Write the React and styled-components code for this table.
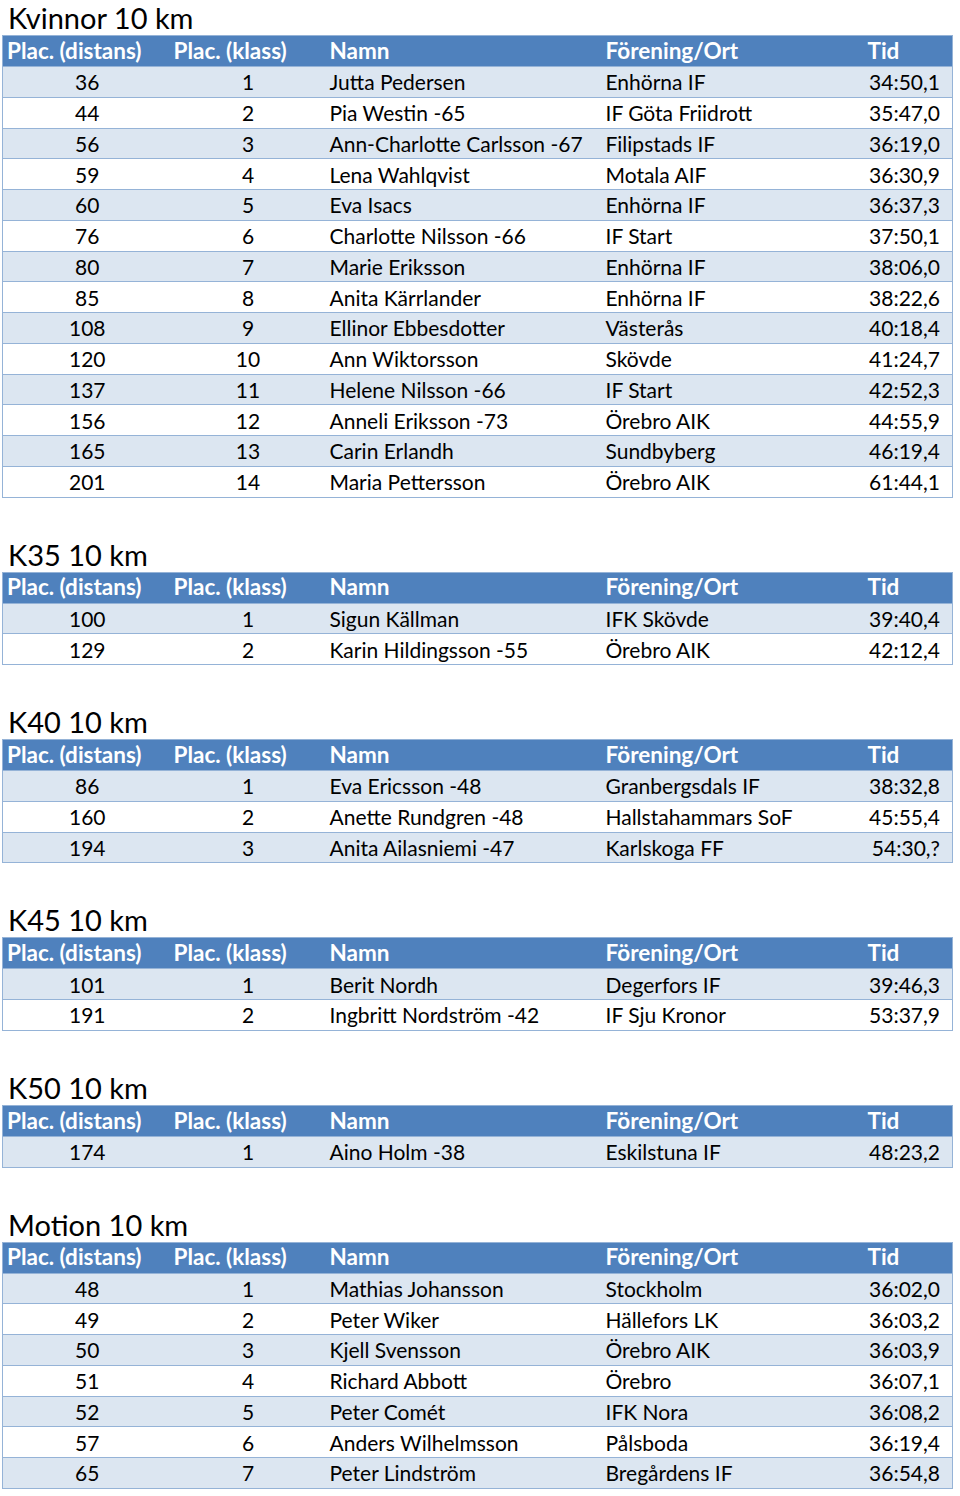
import React from 'react';
import styled, { createGlobalStyle } from 'styled-components';

const GlobalStyle = createGlobalStyle`
  body {
    margin: 0;
    background: #fff;
    font-family: Lato, 'Open Sans', sans-serif;
    color: #000;
  }
`;

const Page = styled.div`
  width: 950px;
  padding: 0 0 0 2px;
`;

const Section = styled.section`
  margin-top: ${(props) => (props.first ? '0' : '39px')};
`;

const Title = styled.h2`
  margin: 0;
  padding-left: 6px;
  font-size: 29px;
  font-weight: 400;
  line-height: 35px;
`;

const Table = styled.table`
  width: 950px;
  border-collapse: collapse;
  table-layout: fixed;
  border: 1px solid #95b3d7;
  font-size: 21px;
`;

const HeadCell = styled.th`
  height: 30px;
  padding: 0 0 0 ${(props) => props.pad || '5px'};
  background: #4f81bd;
  color: #fff;
  font-size: 22.5px;
  font-weight: 700;
  text-align: left;
  white-space: nowrap;
  line-height: 1;
`;

const Row = styled.tr`
  background: ${(props) => (props.odd ? '#dce6f1' : '#fff')};
  border-top: 1px solid #95b3d7;
`;

const Cell = styled.td`
  height: 29.75px;
  padding: 0 ${(props) => (props.align === 'right' ? '12px' : '0')} 0
    ${(props) => (props.align === 'left' ? '5px' : '4px')};
  text-align: ${(props) => props.align || 'center'};
  white-space: nowrap;
  line-height: 1;
`;

const columns = [
  { label: 'Plac. (distans)', width: 165, pad: '4px' },
  { label: 'Plac. (klass)', width: 157, pad: '6px' },
  { label: 'Namn', width: 276, pad: '5px' },
  { label: 'Förening/Ort', width: 262, pad: '5px' },
  { label: 'Tid', width: 90, pad: '5px' },
];

const sections = [
  {
    title: 'Kvinnor 10 km',
    rows: [
      ['36', '1', 'Jutta Pedersen', 'Enhörna IF', '34:50,1'],
      ['44', '2', 'Pia Westin -65', 'IF Göta Friidrott', '35:47,0'],
      ['56', '3', 'Ann-Charlotte Carlsson -67', 'Filipstads IF', '36:19,0'],
      ['59', '4', 'Lena Wahlqvist', 'Motala AIF', '36:30,9'],
      ['60', '5', 'Eva Isacs', 'Enhörna IF', '36:37,3'],
      ['76', '6', 'Charlotte Nilsson -66', 'IF Start', '37:50,1'],
      ['80', '7', 'Marie Eriksson', 'Enhörna IF', '38:06,0'],
      ['85', '8', 'Anita Kärrlander', 'Enhörna IF', '38:22,6'],
      ['108', '9', 'Ellinor Ebbesdotter', 'Västerås', '40:18,4'],
      ['120', '10', 'Ann Wiktorsson', 'Skövde', '41:24,7'],
      ['137', '11', 'Helene Nilsson -66', 'IF Start', '42:52,3'],
      ['156', '12', 'Anneli Eriksson -73', 'Örebro AIK', '44:55,9'],
      ['165', '13', 'Carin Erlandh', 'Sundbyberg', '46:19,4'],
      ['201', '14', 'Maria Pettersson', 'Örebro AIK', '61:44,1'],
    ],
  },
  {
    title: 'K35 10 km',
    rows: [
      ['100', '1', 'Sigun Källman', 'IFK Skövde', '39:40,4'],
      ['129', '2', 'Karin Hildingsson -55', 'Örebro AIK', '42:12,4'],
    ],
  },
  {
    title: 'K40 10 km',
    rows: [
      ['86', '1', 'Eva Ericsson -48', 'Granbergsdals IF', '38:32,8'],
      ['160', '2', 'Anette Rundgren -48', 'Hallstahammars SoF', '45:55,4'],
      ['194', '3', 'Anita Ailasniemi -47', 'Karlskoga FF', '54:30,?'],
    ],
  },
  {
    title: 'K45 10 km',
    rows: [
      ['101', '1', 'Berit Nordh', 'Degerfors IF', '39:46,3'],
      ['191', '2', 'Ingbritt Nordström -42', 'IF Sju Kronor', '53:37,9'],
    ],
  },
  {
    title: 'K50 10 km',
    rows: [['174', '1', 'Aino Holm -38', 'Eskilstuna IF', '48:23,2']],
  },
  {
    title: 'Motion 10 km',
    rows: [
      ['48', '1', 'Mathias Johansson', 'Stockholm', '36:02,0'],
      ['49', '2', 'Peter Wiker', 'Hällefors LK', '36:03,2'],
      ['50', '3', 'Kjell Svensson', 'Örebro AIK', '36:03,9'],
      ['51', '4', 'Richard Abbott', 'Örebro', '36:07,1'],
      ['52', '5', 'Peter Comét', 'IFK Nora', '36:08,2'],
      ['57', '6', 'Anders Wilhelmsson', 'Pålsboda', '36:19,4'],
      ['65', '7', 'Peter Lindström', 'Bregårdens IF', '36:54,8'],
    ],
  },
];

const aligns = ['center', 'center', 'left', 'left', 'right'];

const ResultTable = ({ title, rows, first }) => (
  <Section first={first}>
    <Title>{title}</Title>
    <Table>
      <colgroup>
        {columns.map((c) => (
          <col key={c.label} style={{ width: c.width }} />
        ))}
      </colgroup>
      <thead>
        <tr>
          {columns.map((c) => (
            <HeadCell key={c.label} pad={c.pad}>
              {c.label}
            </HeadCell>
          ))}
        </tr>
      </thead>
      <tbody>
        {rows.map((r, i) => (
          <Row key={r[0]} odd={i % 2 === 0}>
            {r.map((v, j) => (
              <Cell key={j} align={aligns[j]}>
                {v}
              </Cell>
            ))}
          </Row>
        ))}
      </tbody>
    </Table>
  </Section>
);

const App = () => (
  <Page>
    <GlobalStyle />
    {sections.map((s, i) => (
      <ResultTable key={s.title} title={s.title} rows={s.rows} first={i === 0} />
    ))}
  </Page>
);

export default App;
